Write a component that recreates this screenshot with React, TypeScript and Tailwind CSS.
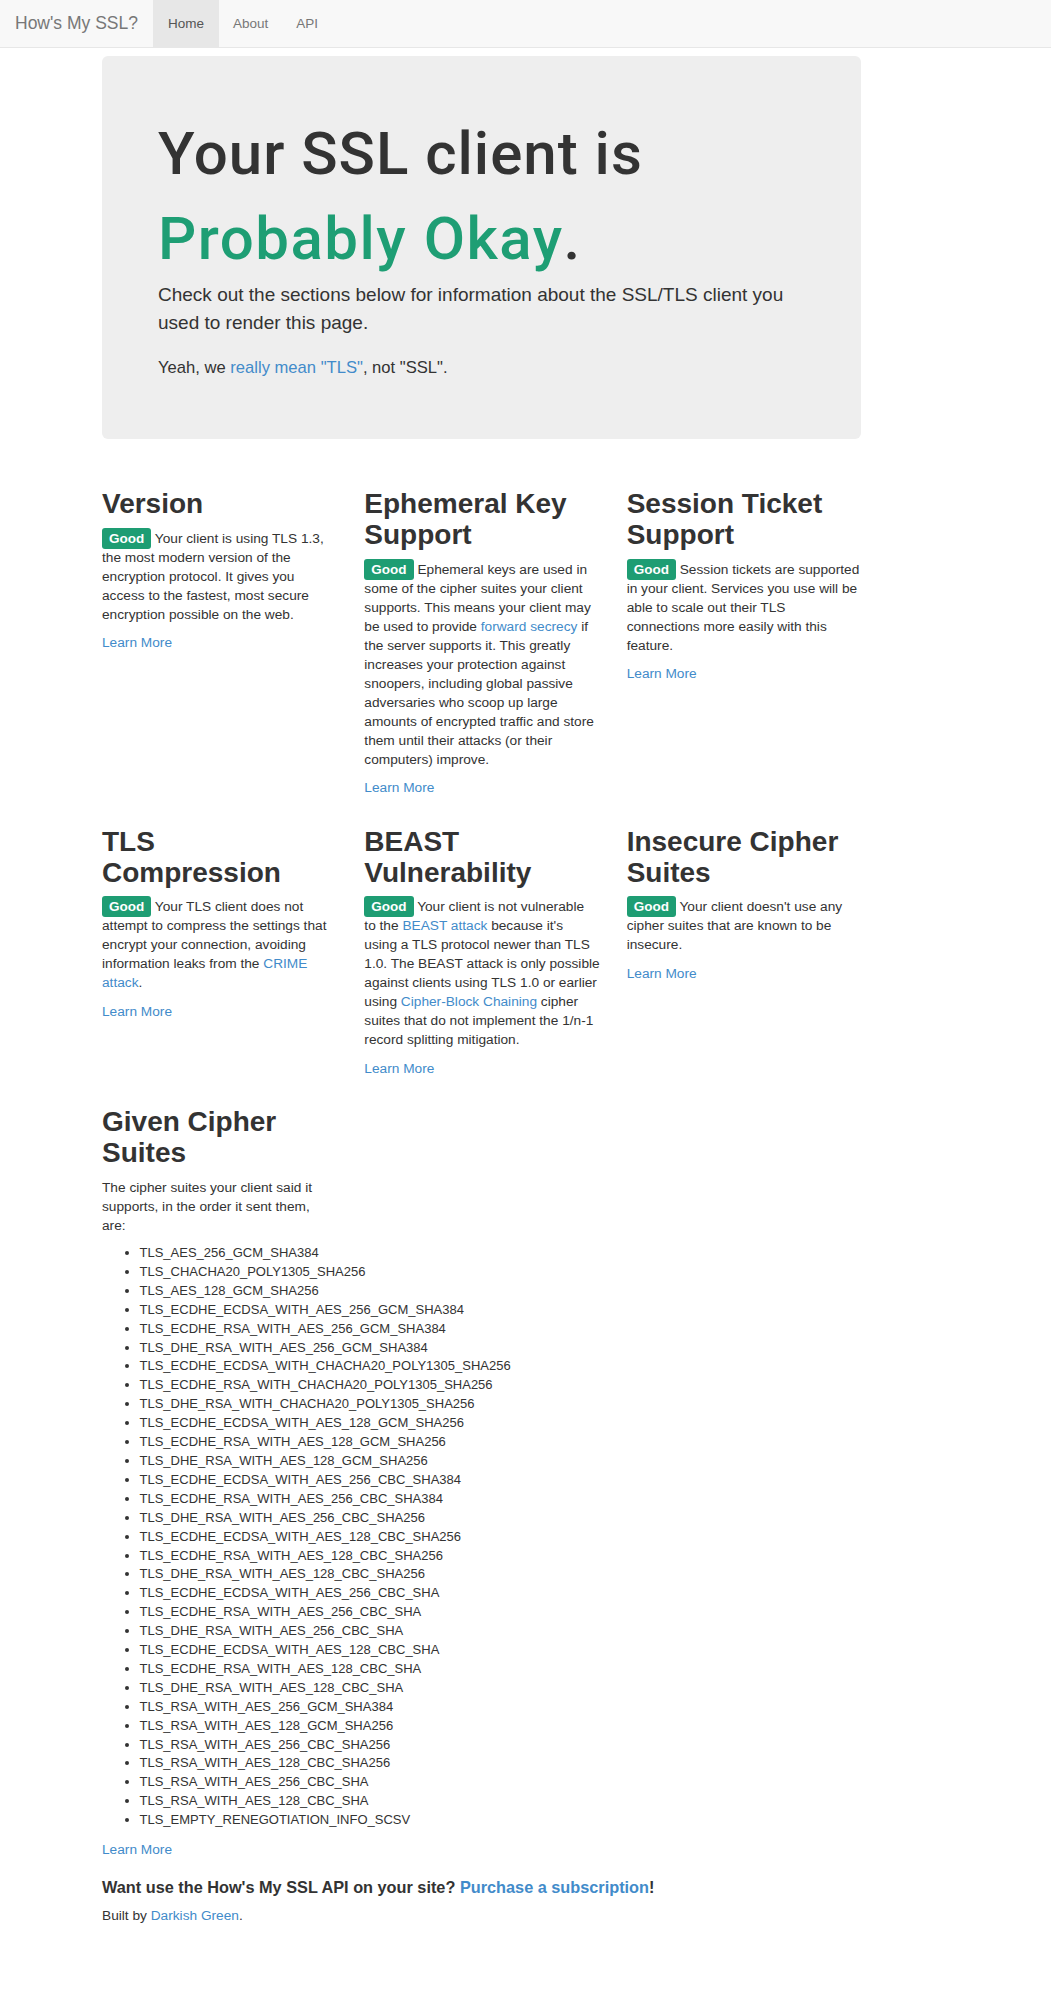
import React from 'react'

const ciphers = [
  'TLS_AES_256_GCM_SHA384',
  'TLS_CHACHA20_POLY1305_SHA256',
  'TLS_AES_128_GCM_SHA256',
  'TLS_ECDHE_ECDSA_WITH_AES_256_GCM_SHA384',
  'TLS_ECDHE_RSA_WITH_AES_256_GCM_SHA384',
  'TLS_DHE_RSA_WITH_AES_256_GCM_SHA384',
  'TLS_ECDHE_ECDSA_WITH_CHACHA20_POLY1305_SHA256',
  'TLS_ECDHE_RSA_WITH_CHACHA20_POLY1305_SHA256',
  'TLS_DHE_RSA_WITH_CHACHA20_POLY1305_SHA256',
  'TLS_ECDHE_ECDSA_WITH_AES_128_GCM_SHA256',
  'TLS_ECDHE_RSA_WITH_AES_128_GCM_SHA256',
  'TLS_DHE_RSA_WITH_AES_128_GCM_SHA256',
  'TLS_ECDHE_ECDSA_WITH_AES_256_CBC_SHA384',
  'TLS_ECDHE_RSA_WITH_AES_256_CBC_SHA384',
  'TLS_DHE_RSA_WITH_AES_256_CBC_SHA256',
  'TLS_ECDHE_ECDSA_WITH_AES_128_CBC_SHA256',
  'TLS_ECDHE_RSA_WITH_AES_128_CBC_SHA256',
  'TLS_DHE_RSA_WITH_AES_128_CBC_SHA256',
  'TLS_ECDHE_ECDSA_WITH_AES_256_CBC_SHA',
  'TLS_ECDHE_RSA_WITH_AES_256_CBC_SHA',
  'TLS_DHE_RSA_WITH_AES_256_CBC_SHA',
  'TLS_ECDHE_ECDSA_WITH_AES_128_CBC_SHA',
  'TLS_ECDHE_RSA_WITH_AES_128_CBC_SHA',
  'TLS_DHE_RSA_WITH_AES_128_CBC_SHA',
  'TLS_RSA_WITH_AES_256_GCM_SHA384',
  'TLS_RSA_WITH_AES_128_GCM_SHA256',
  'TLS_RSA_WITH_AES_256_CBC_SHA256',
  'TLS_RSA_WITH_AES_128_CBC_SHA256',
  'TLS_RSA_WITH_AES_256_CBC_SHA',
  'TLS_RSA_WITH_AES_128_CBC_SHA',
  'TLS_EMPTY_RENEGOTIATION_INFO_SCSV'
]

function A({ children }: { children: React.ReactNode }) {
  return <a href="#" className="text-[#428bca] no-underline">{children}</a>
}

function Good() {
  return (
    <span className="inline rounded-[3px] bg-[#1e9d73] px-[7px] pt-[3px] pb-[3px] text-[13.5px] font-bold text-white">
      Good
    </span>
  )
}

interface SectionProps {
  title: React.ReactNode
  children: React.ReactNode
  nowrap?: boolean
}

function Section({ title, children, nowrap }: SectionProps) {
  return (
    <div>
      <h2 className="mt-[19px] mb-[9.5px] text-[28px] leading-[31px] font-bold text-[#333]">{title}</h2>
      <p className={nowrap ? 'mb-[9.5px] text-[13.7px] whitespace-nowrap' : 'mb-[9.5px] text-[13.7px]'}>
        <Good /> {children}
      </p>
      <p className="mb-[9.5px] text-[13.7px]">
        <A>Learn More</A>
      </p>
    </div>
  )
}

export default function App() {
  return (
    <div className="min-h-[2000px] bg-white font-['Liberation_Sans',Arial,sans-serif] text-[13px] leading-[19px] text-[#333]">
      {/* Navbar */}
      <div className="h-[48px] border-b border-[#e7e7e7] bg-[#f8f8f8]">
        <div className="flex h-[47px] items-stretch">
          <a href="#" className="flex items-center pl-[15px] pr-[15px] text-[17.5px] text-[#777]">How's My SSL?</a>
          <a href="#" className="flex items-center bg-[#e7e7e7] px-[15px] text-[13.5px] text-[#555]">Home</a>
          <a href="#" className="flex items-center px-[14px] text-[13.5px] text-[#777]">About</a>
          <a href="#" className="flex items-center px-[14px] text-[13.5px] text-[#777]">API</a>
        </div>
      </div>

      <div className="ml-[102px] w-[759px] pb-[60px]">
        {/* Jumbotron */}
        <div className="mt-[8px] mb-[30px] rounded-[6px] bg-[#eeeeee] px-[56px] pt-[55px] pb-[59px]">
          <h1 className="font-['Roboto','Liberation_Sans',sans-serif] text-[60px] leading-[85px] font-medium tracking-[1px] text-[#333]">
            Your SSL client is
            <br />
            <span className="tracking-[1.5px] text-[#1e9e74]">Probably Okay</span>.
          </h1>
          <p className="text-[19px] leading-[28px]">
            Check out the sections below for information about the SSL/TLS client you used to render this page.
          </p>
          <p className="mt-[19px] text-[16.6px] leading-[24px]">
            Yeah, we <A>really mean "TLS"</A>, not "SSL".
          </p>
        </div>

        {/* Sections */}
        <div className="grid grid-cols-3 gap-x-[28px]">
          <Section title="Version">
            Your client is using TLS 1.3, the most modern version of the encryption protocol. It gives you access to the
            fastest, most secure encryption possible on the web.
          </Section>
          <Section title="Ephemeral Key Support">
            Ephemeral keys are used in some of the cipher suites your client supports. This means your client may be used
            to provide <A>forward secrecy</A> if the server supports it. This greatly increases your protection against
            snoopers, including global passive adversaries who scoop up large amounts of encrypted traffic and store them
            until their attacks (or their computers) improve.
          </Section>
          <Section title="Session Ticket Support">
            Session tickets are supported in your client. Services you use will be able to scale out their TLS
            connections more easily with this feature.
          </Section>

          <Section title="TLS Compression">
            Your TLS client does not attempt to compress the settings that encrypt your connection, avoiding information
            leaks from the <A>CRIME attack</A>.
          </Section>
          <Section title="BEAST Vulnerability" nowrap>
            Your client is not vulnerable
            <br />
            to the <A>BEAST attack</A> because it's
            <br />
            using a TLS protocol newer than TLS
            <br />
            1.0. The BEAST attack is only possible
            <br />
            against clients using TLS 1.0 or earlier
            <br />
            using <A>Cipher-Block Chaining</A> cipher
            <br />
            suites that do not implement the 1/n-1
            <br />
            record splitting mitigation.
          </Section>
          <Section title="Insecure Cipher Suites">
            Your client doesn't use any cipher suites that are known to be insecure.
          </Section>

          {/* Given cipher suites */}
          <div>
            <h2 className="mt-[19px] mb-[9.5px] text-[28px] leading-[31px] font-bold">Given Cipher Suites</h2>
            <p className="mb-[9.5px] text-[13.7px]">
              The cipher suites your client said it supports, in the order it sent them,
              <br />
              are:
            </p>
            <ul className="mb-[9.5px] list-disc pl-[37.5px] leading-[18.9px]">
              {ciphers.map((c) => (
                <li key={c} className="whitespace-nowrap">{c}</li>
              ))}
            </ul>
            <p className="mb-[9.5px] text-[13.7px]">
              <A>Learn More</A>
            </p>
          </div>
        </div>

        {/* Footer */}
        <h4 className="mt-[9.5px] mb-[9.5px] text-[16.3px] leading-[18.6px] font-bold">
          Want use the How's My SSL API on your site? <A>Purchase a subscription</A>!
        </h4>
        <p className="text-[13.7px]">
          Built by <A>Darkish Green</A>.
        </p>
      </div>
    </div>
  )
}
